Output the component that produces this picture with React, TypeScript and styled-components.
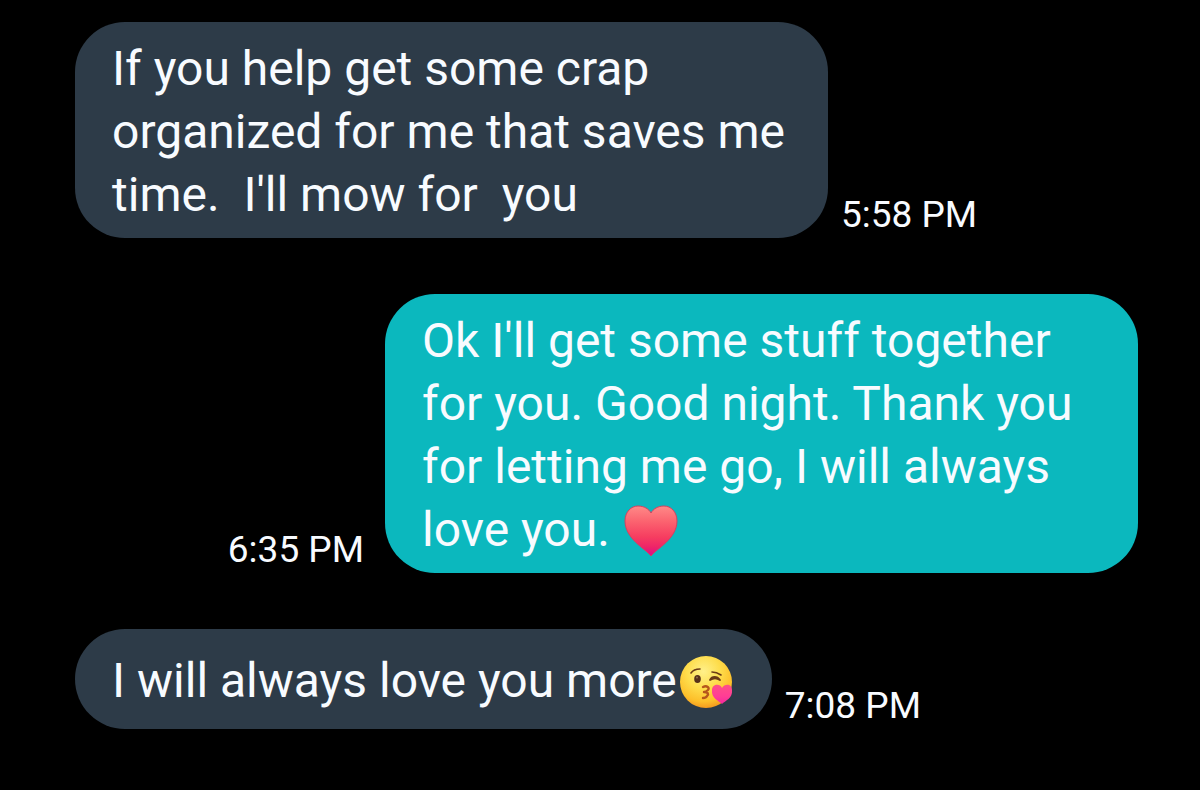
import React from "react";
import styled, { createGlobalStyle } from "styled-components";

const Global = createGlobalStyle`
  body { margin: 0; background: #000; }
`;

type Side = "in" | "out";

const Thread = styled.main`
  box-sizing: border-box;
  display: flex;
  flex-direction: column;
  gap: 56px;
  padding: 22px 62px 56px 75px;
  font-family: Roboto, "Liberation Sans", sans-serif;
  color: #f8fbff;
`;

const Row = styled.article<{ $side: Side }>`
  display: flex;
  flex-direction: ${(p) => (p.$side === "in" ? "row" : "row-reverse")};
  align-items: flex-end;
  gap: ${(p) => (p.$side === "in" ? 13 : 21)}px;
`;

const Bubble = styled.div<{ $side: Side }>`
  box-sizing: border-box;
  display: flex;
  align-items: center;
  max-width: 753px;
  min-height: 100px;
  padding: 15px 37px 12px;
  border-radius: 50px;
  background: ${(p) => (p.$side === "in" ? "#2d3b48" : "#0bb8be")};
`;

const Text = styled.p`
  margin: 0;
  font-size: 48px;
  line-height: 63px;
  white-space: pre-wrap;
`;

const Time = styled.time`
  flex: none;
  padding-bottom: 2px;
  font-size: 37px;
  line-height: 42px;
`;

const Emoji = styled.svg`
  width: 54px;
  height: 54px;
  margin: 0 2px;
  vertical-align: -12px;
`;

const heart =
  "M27 52C22 45 1 35 1 17C1 8 7 2 14 2C20 2 25 5 27 9C29 5 34 2 40 2C47 2 53 8 53 17C53 35 32 45 27 52Z";

const Heart = () => (
  <Emoji viewBox="0 0 54 54" role="img" aria-label="red heart">
    <defs>
      <linearGradient id="heartFill" x1="0" y1="0" x2="0" y2="1">
        <stop offset="0" stopColor="#ff8a88" />
        <stop offset="0.3" stopColor="#fb6470" />
        <stop offset="0.62" stopColor="#f63d60" />
        <stop offset="0.82" stopColor="#ee2468" />
        <stop offset="1" stopColor="#dc0790" />
      </linearGradient>
    </defs>
    <path d={heart} fill="url(#heartFill)" stroke="#d4405f" strokeWidth="1" />
  </Emoji>
);

const Kiss = () => (
  <Emoji viewBox="0 0 54 54" role="img" aria-label="face blowing a kiss">
    <defs>
      <radialGradient id="faceFill" cx="0.45" cy="0.3" r="0.72">
        <stop offset="0" stopColor="#fff08a" />
        <stop offset="0.45" stopColor="#fedd4c" />
        <stop offset="0.8" stopColor="#fdbf2a" />
        <stop offset="1" stopColor="#f3951d" />
      </radialGradient>
      <linearGradient id="kissHeart" x1="0" y1="0" x2="0" y2="1">
        <stop offset="0" stopColor="#ff5088" />
        <stop offset="0.6" stopColor="#ff3d95" />
        <stop offset="1" stopColor="#f428a0" />
      </linearGradient>
    </defs>
    <circle cx="27" cy="27" r="26" fill="url(#faceFill)" />
    <g fill="none" stroke="#6b3a16" strokeLinecap="round" strokeLinejoin="round">
      <path d="M12 18C14 15 17 14 21 14" strokeWidth="1.6" />
      <path d="M33 17C36 17 39 18 42 20" strokeWidth="1.6" />
      <path d="M31 25C33 21 38 21 41 25C38 23 34 23 31 25Z" strokeWidth="1.8" />
      <path
        d="M24 32C28 30 31 33 29 35C28 36 27 37 25 37C29 37 30 39 28 41C27 43 25 43 24 43"
        stroke="#b5561c"
        strokeWidth="2.4"
      />
    </g>
    <ellipse cx="18.5" cy="24" rx="3.3" ry="4" fill="#56301a" />
    <circle cx="18" cy="22.5" r="1" fill="#94704b" />
    <path
      d="M43 49C40 46 32 43 33 35C33 29 41 28 43 33C46 28 53 29 53 35C54 43 46 46 43 49Z"
      fill="url(#kissHeart)"
    />
  </Emoji>
);

interface MessageProps {
  side: Side;
  time: string;
  dateTime: string;
  children: React.ReactNode;
}

const Message = ({ side, time, dateTime, children }: MessageProps) => (
  <Row $side={side}>
    <Bubble $side={side}>
      <Text>{children}</Text>
    </Bubble>
    <Time dateTime={dateTime}>{time}</Time>
  </Row>
);

export default function App() {
  return (
    <>
      <Global />
      <Thread>
        <Message side="in" time="5:58 PM" dateTime="17:58">
          {"If you help get some crap organized for me that saves me time.  I'll mow for  you"}
        </Message>
        <Message side="out" time="6:35 PM" dateTime="18:35">
          {"Ok I'll get some stuff together for you. Good night. Thank you for letting me go, I will always love you. "}
          <Heart />
        </Message>
        <Message side="in" time="7:08 PM" dateTime="19:08">
          I will always love you more
          <Kiss />
        </Message>
      </Thread>
    </>
  );
}
